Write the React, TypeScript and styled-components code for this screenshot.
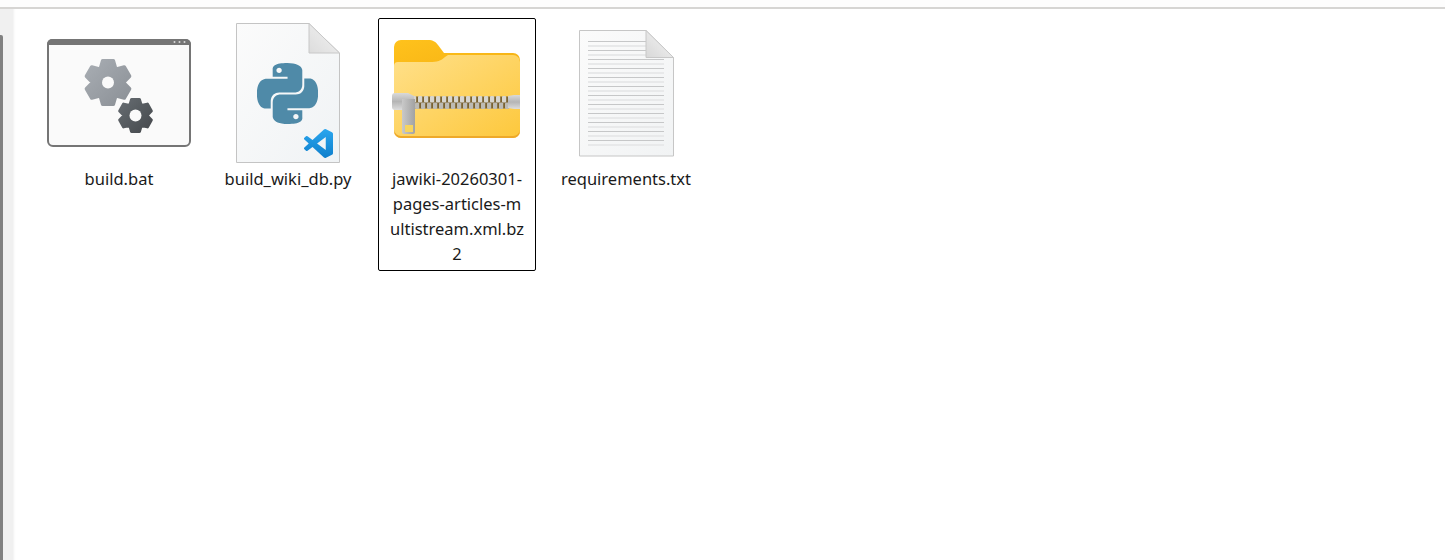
import React from 'react';
import styled, { createGlobalStyle } from 'styled-components';
import { SiPython } from 'react-icons/si';

const GlobalStyle = createGlobalStyle`
  html, body {
    margin: 0;
    padding: 0;
    background: #fff;
  }
`;

const Page = styled.div`
  width: 1445px;
  height: 560px;
  display: flex;
  flex-direction: column;
  overflow: hidden;
  background: #fff;
  font-family: "Noto Sans", "Open Sans", sans-serif;
`;

const TopStrip = styled.div`
  height: 7px;
  flex: none;
  background: #fdfdfd;
  border-bottom: 2px solid #d6d5d3;
`;

const Body = styled.div`
  flex: 1;
  display: flex;
  min-height: 0;
`;

const Rail = styled.div`
  width: 16px;
  flex: none;
  display: flex;
  background: linear-gradient(to right, #f0f0f0 0, #f0f0f0 13px, #fafafa 14px, #fff 16px);
`;

const RailThumb = styled.div`
  width: 3px;
  margin-top: 26px;
  background: #808080;
  border-top-right-radius: 2px;
`;

const Grid = styled.div`
  flex: 1;
  display: flex;
  align-items: flex-start;
  gap: 11px;
  padding: 9px 0 0 24px;
`;

const Item = styled.div<{ $selected?: boolean }>`
  width: 158px;
  box-sizing: border-box;
  padding: 2px 0 4px;
  display: flex;
  flex-direction: column;
  align-items: center;
  border: 1px solid ${p => (p.$selected ? '#000' : 'transparent')};
  border-radius: 2px;
`;

const Icon = styled.svg`
  width: 144px;
  height: 144px;
  flex: none;
  display: block;
`;

const Label = styled.div`
  width: 150px;
  margin-top: 1px;
  font-size: 16.5px;
  line-height: 25px;
  color: #1a1a1a;
  text-align: center;
  white-space: nowrap;
`;

// six lobed gear outline, rounded by the stroke it is drawn with
const gearPoints = (cx: number, cy: number, outer: number, inner: number) => {
  const pts: string[] = [];
  for (let i = 0; i < 6; i++) {
    const mid = (i * Math.PI) / 3 - Math.PI / 2;
    [
      [mid - 0.24, outer],
      [mid + 0.24, outer],
      [mid + Math.PI / 6, inner],
    ].forEach(([a, r]) => {
      pts.push(`${(cx + r * Math.cos(a)).toFixed(2)},${(cy + r * Math.sin(a)).toFixed(2)}`);
    });
  }
  return pts.join(' ');
};

const BatIcon = () => (
  <Icon viewBox="0 0 144 144">
    <defs>
      <linearGradient id="gearA" x1="0" y1="0" x2="1" y2="1">
        <stop offset="0" stopColor="#a8adb3" />
        <stop offset="1" stopColor="#8b9096" />
      </linearGradient>
      <linearGradient id="gearB" x1="0" y1="0" x2="1" y2="1">
        <stop offset="0" stopColor="#666c71" />
        <stop offset="1" stopColor="#45494d" />
      </linearGradient>
    </defs>
    <rect x="1" y="19" width="142" height="106" rx="5" fill="#fafafa" stroke="#757575" strokeWidth="2" />
    <path d="M0 23a5 5 0 0 1 5-5h134a5 5 0 0 1 5 5v1H0z" fill="#757575" />
    <circle cx="127.5" cy="21" r="1" fill="#d8d8d8" />
    <circle cx="132.5" cy="21" r="1" fill="#d8d8d8" />
    <circle cx="137.5" cy="21" r="1" fill="#d8d8d8" />
    <polygon points={gearPoints(61, 61.5, 22.5, 15.5)} fill="url(#gearA)" stroke="url(#gearA)" strokeWidth="3.5" strokeLinejoin="round" />
    <circle cx="61" cy="61.5" r="6" fill="#fafafa" />
    <polygon points={gearPoints(88.5, 94.5, 16.5, 11.5)} fill="url(#gearB)" stroke="url(#gearB)" strokeWidth="3" strokeLinejoin="round" />
    <circle cx="88.5" cy="94.5" r="6" fill="#fafafa" />
  </Icon>
);

const PyIcon = () => (
  <Icon viewBox="0 0 144 144">
    <defs>
      <linearGradient id="pyPage" x1="0" y1="0" x2="1" y2="1">
        <stop offset="0" stopColor="#fbfbfb" />
        <stop offset="1" stopColor="#f0f3f5" />
      </linearGradient>
      <linearGradient id="pyFold" x1="0" y1="1" x2="1" y2="0">
        <stop offset="0" stopColor="#dcdcdc" />
        <stop offset="1" stopColor="#f4f4f4" />
      </linearGradient>
      <linearGradient id="vsBlue" x1="0" y1="0" x2="0" y2="1">
        <stop offset="0" stopColor="#2aa6ee" />
        <stop offset="1" stopColor="#0f7fcc" />
      </linearGradient>
    </defs>
    <path d="M20.5 2.5H93L123.5 32V141.5H20.5z" fill="url(#pyPage)" stroke="#c4c4c4" />
    <path d="M93 2.5V32H123.5z" fill="url(#pyFold)" stroke="#c8c8c8" />
    <SiPython x="41" y="42" size={61} color="#4f8aa8" />
    <svg x="88" y="108" width="29" height="29" viewBox="0 0 100 100">
      <path
        fillRule="evenodd"
        d="M70.9 99.3a6.2 6.2 0 0 0 5-.2l20.6-9.9a6.2 6.2 0 0 0 3.5-5.6V16.4a6.2 6.2 0 0 0-3.5-5.6L75.9.9a6.2 6.2 0 0 0-7.1 1.2L29.4 38 12.2 25a4.2 4.2 0 0 0-5.3.2L1.4 30.3a4.2 4.2 0 0 0 0 6.2L16.3 50 1.4 63.5a4.2 4.2 0 0 0 0 6.2l5.5 5a4.2 4.2 0 0 0 5.3.3L29.4 62l39.4 35.9a6.2 6.2 0 0 0 2.1 1.4ZM75 27.3 45.1 50 75 72.7V27.3Z"
        fill="url(#vsBlue)"
      />
    </svg>
  </Icon>
);

const ZipIcon = () => (
  <Icon viewBox="0 0 144 144">
    <defs>
      <linearGradient id="zipBack" x1="0" y1="0" x2="1" y2="1">
        <stop offset="0" stopColor="#ffc21c" />
        <stop offset="1" stopColor="#f3ae12" />
      </linearGradient>
      <linearGradient id="zipFront" x1="0" y1="0" x2="1" y2="1">
        <stop offset="0" stopColor="#ffe08a" />
        <stop offset="1" stopColor="#fdc83c" />
      </linearGradient>
      <linearGradient id="zipMetal" x1="0" y1="0" x2="0" y2="1">
        <stop offset="0" stopColor="#d9d9d9" />
        <stop offset="0.5" stopColor="#b5b5b5" />
        <stop offset="1" stopColor="#dcdcdc" />
      </linearGradient>
      <linearGradient id="zipPull" x1="0" y1="0" x2="1" y2="0">
        <stop offset="0" stopColor="#c9c9c9" />
        <stop offset="1" stopColor="#a2a2a2" />
      </linearGradient>
    </defs>
    <path d="M9 26a7 7 0 0 1 7-7h27c5 0 8 2 10 5l6 8h69a7 7 0 0 1 7 7v20H9z" fill="url(#zipBack)" />
    <path d="M9 45a4 4 0 0 1 4-4h32c7 0 11-1 15-5l3-2h65a7 7 0 0 1 7 7v69a7 7 0 0 1-7 7H16a7 7 0 0 1-7-7z" fill="url(#zipFront)" />
    <path d="M9 110a7 7 0 0 0 7 7h112a7 7 0 0 0 7-7v-1a7 7 0 0 1-7 6H16a7 7 0 0 1-7-6z" fill="#eea92a" />
    <rect x="26" y="75.5" width="98" height="12" fill="#7a6230" />
    {Array.from({ length: 16 }, (_, i) => (
      <rect key={`t${i}`} x={27 + i * 6} y="75" width="4.2" height="6.5" rx="1" fill="#d8d6cf" />
    ))}
    {Array.from({ length: 16 }, (_, i) => (
      <rect key={`b${i}`} x={30 + i * 6} y="81.5" width="4.2" height="6.5" rx="1" fill="#bdbbb4" />
    ))}
    <path d="M7 75a3 3 0 0 1 3-3h13l6 3v12l-6 2H10a3 3 0 0 1-3-3z" fill="url(#zipMetal)" />
    <path d="M123 75l6-1h6v14h-6l-6-1z" fill="url(#zipMetal)" />
    <path d="M17 78h13v33a2 2 0 0 1-2 2h-9a2 2 0 0 1-2-2z" fill="url(#zipPull)" />
    <rect x="20" y="104" width="8" height="7" fill="#f6d45e" />
  </Icon>
);

const TxtIcon = () => (
  <Icon viewBox="0 0 144 144">
    <defs>
      <linearGradient id="txtPage" x1="0" y1="0" x2="1" y2="1">
        <stop offset="0" stopColor="#fbfbfb" />
        <stop offset="1" stopColor="#f1f3f4" />
      </linearGradient>
      <linearGradient id="txtFold" x1="0" y1="1" x2="1" y2="0">
        <stop offset="0" stopColor="#d8d8d8" />
        <stop offset="1" stopColor="#f6f6f6" />
      </linearGradient>
    </defs>
    <path d="M25.5 9.5H92L119.5 36.5V135H25.5z" fill="url(#txtPage)" stroke="#c6c6c6" />
    {Array.from({ length: 24 }, (_, i) => {
      const y = 20.5 + i * 4.5;
      return (
        <line
          key={i}
          x1="34"
          x2={y < 36 ? 92 : 110}
          y1={y}
          y2={y}
          stroke={i % 2 === 0 ? '#c6c7c8' : '#e8e9ea'}
          strokeWidth={i % 2 === 0 ? 1 : 2}
        />
      );
    })}
    <path d="M92 9.5V36.5H119.5z" fill="url(#txtFold)" stroke="#c8c8c8" />
  </Icon>
);

export default function App() {
  return (
    <Page>
      <GlobalStyle />
      <TopStrip />
      <Body>
        <Rail>
          <RailThumb />
        </Rail>
        <Grid>
          <Item>
            <BatIcon />
            <Label>build.bat</Label>
          </Item>
          <Item>
            <PyIcon />
            <Label>build_wiki_db.py</Label>
          </Item>
          <Item $selected>
            <ZipIcon />
            <Label>
              jawiki-20260301-
              <br />
              pages-articles-m
              <br />
              ultistream.xml.bz
              <br />2
            </Label>
          </Item>
          <Item>
            <TxtIcon />
            <Label>requirements.txt</Label>
          </Item>
        </Grid>
      </Body>
    </Page>
  );
}
